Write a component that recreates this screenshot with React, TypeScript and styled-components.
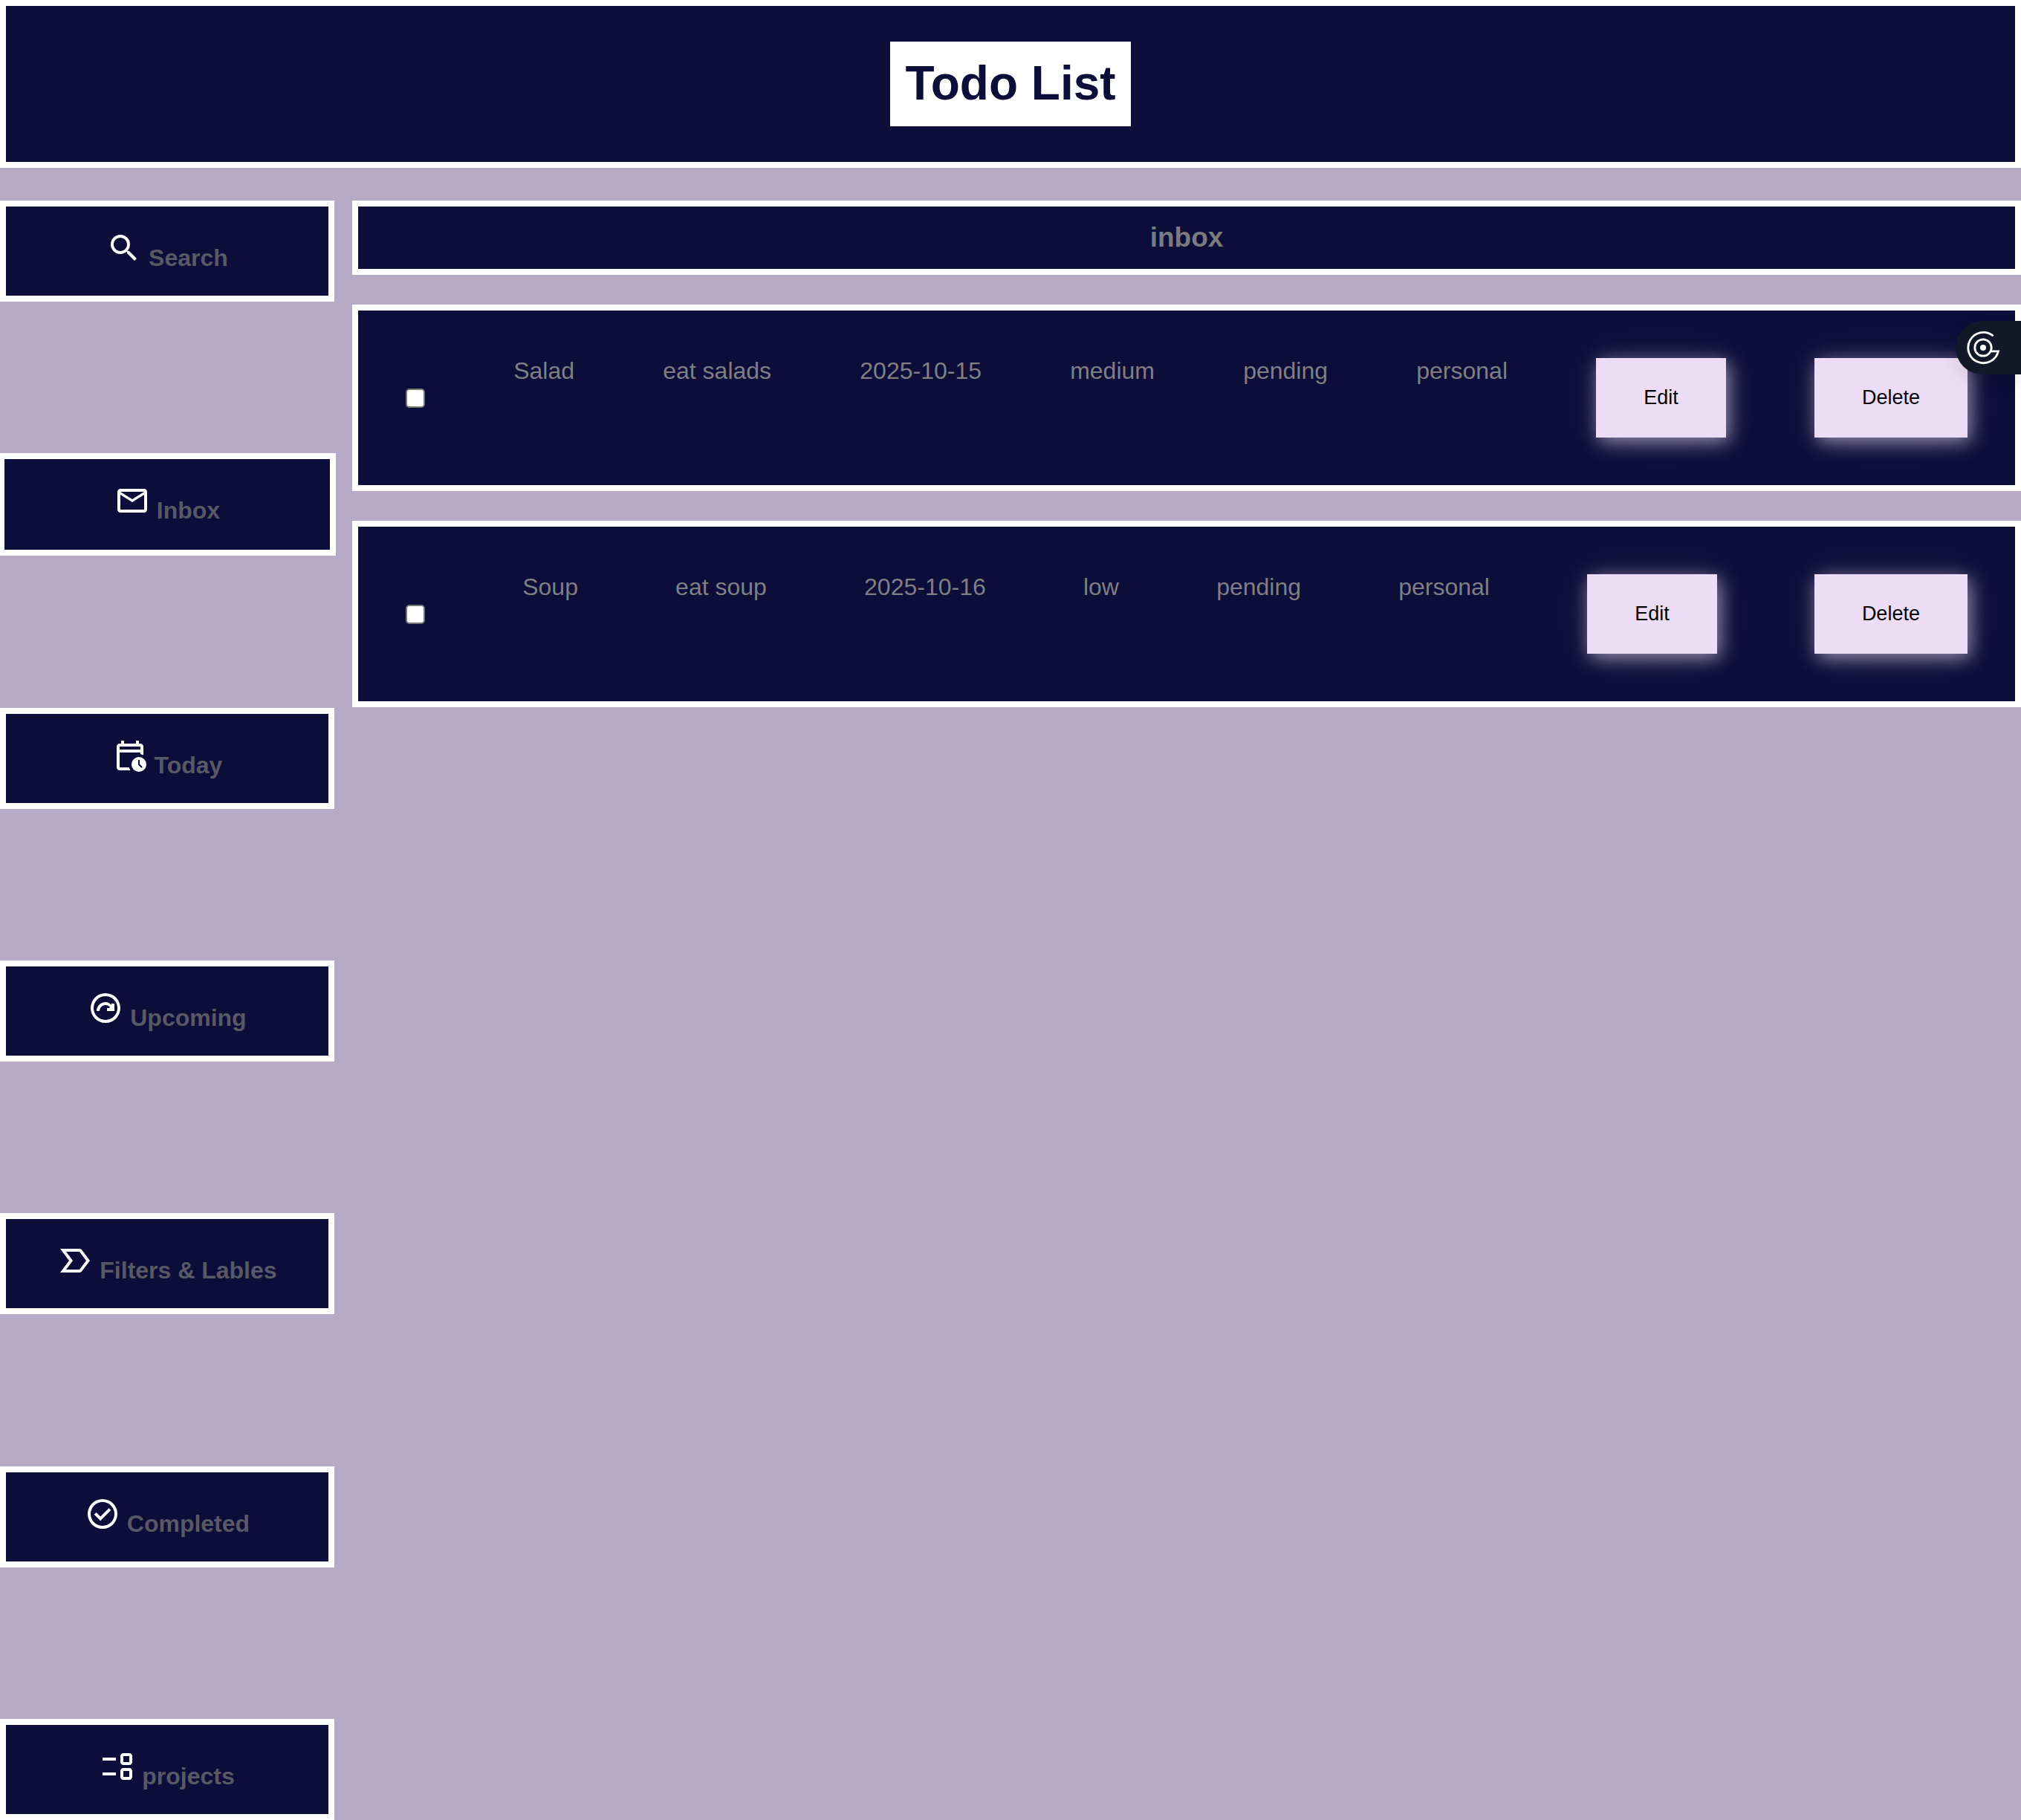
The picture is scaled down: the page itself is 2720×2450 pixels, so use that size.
import React from "react";
import styled, { createGlobalStyle } from "styled-components";

const ink = "#0c0d38";
const mist = "#b5abc7";
const sans = `"Liberation Sans", Arial, sans-serif`;

const GlobalStyle = createGlobalStyle`
  *, *::before, *::after { box-sizing: border-box; }
  body {
    margin: 0;
    background: ${mist};
    font-family: ${sans};
    font-size: 32px;
    overflow-x: hidden;
  }
`;

const Page = styled.div`
  display: flex;
  flex-direction: column;
  gap: 44px;
  min-height: 100vh;
`;

const Header = styled.header`
  display: flex;
  justify-content: center;
  padding: 48px;
  border: 8px solid #fff;
  background: ${ink};
`;

const Title = styled.h1`
  margin: 0;
  padding: 19px 20px 21px;
  background: #fff;
  color: ${ink};
  font-size: 64px;
  line-height: 74px;
`;

const Body = styled.div`
  display: grid;
  grid-template-columns: 450px minmax(0, 1fr);
  column-gap: 24px;
  flex: 1;
`;

const Sidebar = styled.nav`
  display: flex;
  flex-direction: column;
  justify-content: space-between;
`;

const NavLink = styled.a<{ $active?: boolean }>`
  display: block;
  height: ${(p) => (p.$active ? 138 : 136)}px;
  margin: 0 ${(p) => (p.$active ? -2 : 0)}px;
  padding: 32px 0;
  border: 8px solid #fff;
  background: ${ink};
  color: #595866;
  font-weight: 700;
  text-align: center;
  text-decoration: none;
  white-space: nowrap;
`;

const NavIcon = styled.svg`
  width: 48px;
  height: 48px;
  fill: #fff;
`;

const Main = styled.main`
  display: flex;
  flex-direction: column;
  gap: 40px;
`;

const SectionTitle = styled.h2`
  margin: 0;
  padding: 20px;
  border: 8px solid #fff;
  background: ${ink};
  color: #7b7a7f;
  font-size: 37px;
  line-height: 44px;
  text-align: center;
`;

const TaskList = styled.ul`
  display: flex;
  flex-direction: column;
  gap: 40px;
  margin: 0;
  padding: 0;
  list-style: none;
`;

const Task = styled.li`
  display: flex;
  justify-content: space-between;
  padding: 64px;
  border: 8px solid #fff;
  background: ${ink};
  color: #7f7f85;
`;

const Field = styled.span`
  line-height: 35px;
`;

const Check = styled.input`
  align-self: center;
  appearance: none;
  width: 26px;
  height: 26px;
  margin: 0;
  border: 2px solid #767676;
  border-radius: 5px;
  background: #fff;
  &:checked { background: #0075ff; }
`;

const Action = styled.button`
  padding: 38px 64px;
  border: 0;
  background: #eddcf6;
  color: #000;
  font-family: inherit;
  font-size: 27px;
  line-height: 31px;
  box-shadow:
    4px 6px 24px rgba(237, 220, 246, 0.6),
    0 0 64px rgba(237, 220, 246, 0.1);
  cursor: pointer;
`;

const Widget = styled.button`
  position: fixed;
  top: 432px;
  right: 0;
  width: 88px;
  height: 72px;
  padding: 0 0 0 15px;
  display: flex;
  align-items: center;
  border: 0;
  border-radius: 36px 0 0 36px;
  background: #111827;
  box-shadow: 0 8px 24px rgba(0, 0, 0, 0.1);
  cursor: pointer;
`;

const navItems = [
  {
    label: "Search",
    path: "M15.5 14h-.79l-.28-.27A6.47 6.47 0 0 0 16 9.5 6.5 6.5 0 1 0 9.5 16c1.61 0 3.09-.59 4.23-1.57l.27.28v.79l5 4.99L20.49 19l-4.99-5zm-6 0C7.01 14 5 11.99 5 9.5S7.01 5 9.5 5 14 7.01 14 9.5 11.99 14 9.5 14z",
  },
  {
    label: "Inbox",
    active: true,
    path: "M22 6c0-1.1-.9-2-2-2H4c-1.1 0-2 .9-2 2v12c0 1.1.9 2 2 2h16c1.1 0 2-.9 2-2V6zm-2 0-8 4.99L4 6h16zm0 12H4V8l8 5 8-5v10z",
  },
  {
    label: "Today",
    path: "M5 22q-.825 0-1.413-.588T3 20V6q0-.825.588-1.413T5 4h1V2h2v2h8V2h2v2h1q.825 0 1.413.588T21 6v5.7q-.475-.225-.975-.363T19 11.075V10H5v10h6.3q.175.55.413 1.05t.562.95H5Zm13 1q-2.075 0-3.538-1.463T13 18q0-2.075 1.463-3.538T18 13q2.075 0 3.538 1.463T23 18q0 2.075-1.463 3.538T18 23Zm1.675-2.625.7-.7L18.5 17.8V15h-1v3.2l2.175 2.175ZM5 8h14V6H5v2Z",
  },
  {
    label: "Upcoming",
    path: "M12 22q-2.075 0-3.9-.788t-3.175-2.137T2.788 15.9T2 12t.788-3.9 2.137-3.175T8.1 2.788 12 2t3.9.788 3.175 2.137T21.213 8.1 22 12t-.788 3.9-2.137 3.175-3.175 2.138T12 22Zm0-2q3.35 0 5.675-2.325T20 12t-2.325-5.675T12 4 6.325 6.325 4 12t2.325 5.675T12 20ZM6 14h2q0-1.65 1.175-2.825T12 10q.95 0 1.75.425T15.075 11.5L14.5 12H13v2h5V9h-2v1q-.75-.925-1.788-1.463T12 8Q9.5 8 7.75 9.75T6 14Z",
  },
  {
    label: "Filters & Lables",
    path: "M2 20l5.975-8L2 4h13q.5 0 .925.225t.7.625L22 12l-5.375 7.15q-.275.4-.7.625T15 20H2Zm4-2h9l4.5-6L15 6H6l4.5 6L6 18Z",
  },
  {
    label: "Completed",
    path: "m10.6 16.6 7.05-7.05-1.4-1.4-5.65 5.65-2.85-2.85-1.4 1.4 4.25 4.25ZM12 22q-2.075 0-3.9-.788t-3.175-2.137T2.788 15.9T2 12t.788-3.9 2.137-3.175T8.1 2.788 12 2t3.9.788 3.175 2.137T21.213 8.1 22 12t-.788 3.9-2.137 3.175-3.175 2.138T12 22Zm0-2q3.35 0 5.675-2.325T20 12t-2.325-5.675T12 4 6.325 6.325 4 12t2.325 5.675T12 20Z",
  },
  {
    label: "projects",
    path: "M16 21q-.825 0-1.413-.588T14 19v-4q0-.825.588-1.413T16 13h4q.825 0 1.413.588T22 15v4q0 .825-.588 1.413T20 21h-4Zm0-2h4v-4h-4v4ZM2 18v-2h9v2H2Zm14-7q-.825 0-1.413-.588T14 9V5q0-.825.588-1.413T16 3h4q.825 0 1.413.588T22 5v4q0 .825-.588 1.413T20 11h-4Zm0-2h4V5h-4v4ZM2 8V6h9v2H2Z",
  },
];

const tasks = [
  { title: "Salad", note: "eat salads", due: "2025-10-15", priority: "medium", status: "pending", list: "personal" },
  { title: "Soup", note: "eat soup", due: "2025-10-16", priority: "low", status: "pending", list: "personal" },
];

export default function App() {
  return (
    <Page>
      <GlobalStyle />
      <Header>
        <Title>Todo List</Title>
      </Header>
      <Body>
        <Sidebar>
          {navItems.map((item) => (
            <NavLink key={item.label} href="#" $active={item.active}>
              <NavIcon viewBox="0 0 24 24" aria-hidden="true">
                <path d={item.path} />
              </NavIcon>{" "}
              {item.label}
            </NavLink>
          ))}
        </Sidebar>
        <Main>
          <SectionTitle>inbox</SectionTitle>
          <TaskList>
            {tasks.map((task) => (
              <Task key={task.title}>
                <Check type="checkbox" aria-label={`Complete ${task.title}`} />
                <Field>{task.title}</Field>
                <Field>{task.note}</Field>
                <Field>{task.due}</Field>
                <Field>{task.priority}</Field>
                <Field>{task.status}</Field>
                <Field>{task.list}</Field>
                <Action type="button">Edit</Action>
                <Action type="button">Delete</Action>
              </Task>
            ))}
          </TaskList>
        </Main>
      </Body>
      <Widget type="button" aria-label="Open assistant">
        <svg width="46" height="46" viewBox="0 0 46 46" fill="none" stroke="#fff" strokeWidth="2.8" aria-hidden="true">
          <path d="M34.7 6.5A20.6 20.6 0 1 0 42.5 27.8H33" strokeLinecap="round" />
          <circle cx="22" cy="23" r="11.2" />
          <circle cx="22" cy="23" r="4" fill="#fff" stroke="none" />
        </svg>
      </Widget>
    </Page>
  );
}
